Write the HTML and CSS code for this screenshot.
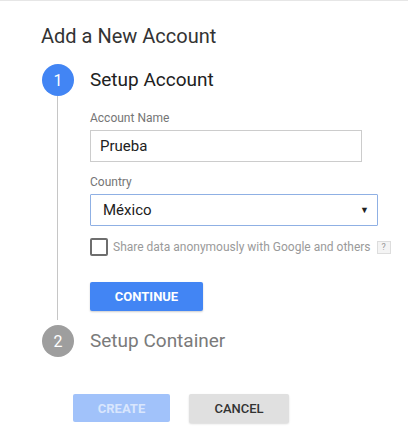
FILE: index.html
```html
<!DOCTYPE html>
<html lang="en">
<head>
<meta charset="utf-8">
<title>Add a New Account</title>
<link rel="stylesheet" href="styles.css">
</head>
<body>
<div class="page">
  <h1 class="title">Add a New Account</h1>

  <div class="stepper">
    <div class="step-head">
      <div class="num num-active">1</div>
      <div class="step-title">Setup Account</div>
    </div>
    <div class="step-body">
      <div class="rail-col"><div class="rail"></div></div>
      <div class="content">
        <label class="label">Account Name</label>
        <div class="input">Prueba</div>
        <label class="label label-country">Country</label>
        <div class="select">
          <span>México</span>
          <span class="caret">&#9660;</span>
        </div>
        <div class="check-row">
          <span class="checkbox"></span>
          <span class="check-text">Share data anonymously with Google and others</span>
          <span class="help">?</span>
        </div>
        <button class="btn btn-primary">CONTINUE</button>
      </div>
    </div>
    <div class="step-head step-2">
      <div class="num num-inactive">2</div>
      <div class="step-title step-title-inactive">Setup Container</div>
    </div>
  </div>

  <div class="actions">
    <button class="btn btn-disabled">CREATE</button>
    <button class="btn btn-secondary">CANCEL</button>
  </div>
</div>
</body>
</html>
```

FILE: styles.css
```css
html, body {
  margin: 0;
  padding: 0;
  background: #ffffff;
}
body {
  font-family: Roboto, "Liberation Sans", Arial, sans-serif;
  border-top: 1px solid #e6e6e6;
  height: 444px;
  overflow: hidden;
}
.page {
  padding-left: 41px;
}
.title {
  margin: 23px 0 0 0;
  font-size: 20px;
  line-height: 24px;
  font-weight: 400;
  color: #333333;
}
.stepper {
  margin-top: 16px;
  margin-left: 1px;
}
.step-head {
  display: flex;
  align-items: center;
  gap: 16px;
  height: 32px;
}
.num {
  width: 32px;
  height: 32px;
  border-radius: 50%;
  color: #ffffff;
  font-size: 16px;
  display: flex;
  align-items: center;
  justify-content: center;
  flex: none;
}
.num-active { background: #4285f4; }
.num-inactive { background: #9e9e9e; }
.step-title {
  font-size: 19px;
  color: #212121;
  line-height: 24px;
}
.step-title-inactive {
  color: #7a7a7a;
}
.step-body {
  display: flex;
  gap: 16px;
}
.rail-col {
  width: 32px;
  flex: none;
  display: flex;
  justify-content: center;
}
.rail {
  width: 0;
  border-left: 1px solid #c6c6c6;
  margin-right: 1px;
}
.content {
  padding-top: 14px;
  padding-bottom: 9px;
  display: flex;
  flex-direction: column;
  align-items: flex-start;
}
.label {
  font-size: 12px;
  line-height: 16px;
  color: #757575;
  margin-bottom: 4px;
}
.label-country {
  margin-top: 12px;
}
.input {
  box-sizing: border-box;
  width: 272px;
  height: 32px;
  border: 1px solid #cccccc;
  padding: 0 9px;
  font-size: 15px;
  line-height: 30px;
  color: #212121;
}
.select {
  box-sizing: border-box;
  width: 288px;
  height: 32px;
  border: 1px solid #8fb0e4;
  border-radius: 1px;
  padding: 0 8px 0 12px;
  font-size: 15px;
  line-height: 30px;
  color: #212121;
  display: flex;
  justify-content: space-between;
  align-items: center;
}
.caret {
  font-size: 9px;
  color: #222222;
}
.check-row {
  margin-top: 12px;
  display: flex;
  align-items: center;
  height: 18px;
}
.checkbox {
  box-sizing: border-box;
  width: 18px;
  height: 18px;
  border: 2px solid #6e6e6e;
  border-radius: 2px;
  flex: none;
}
.check-text {
  margin-left: 5px;
  font-size: 12px;
  color: #9a9a9a;
  white-space: nowrap;
}
.help {
  box-sizing: border-box;
  margin-left: 6px;
  width: 14px;
  height: 13px;
  border: 1px solid #dddddd;
  background: #f4f4f4;
  color: #999999;
  font-size: 9px;
  line-height: 11px;
  text-align: center;
}
.btn {
  font-family: Roboto, "Liberation Sans", Arial, sans-serif;
  border: none;
  border-radius: 2px;
  font-size: 13px;
  padding: 0;
  height: 29px;
  cursor: pointer;
}
.btn-primary {
  margin-top: 26px;
  width: 113px;
  background: #4285f4;
  color: #ffffff;
  font-weight: 700;
  box-shadow: 0 1px 2px rgba(0,0,0,0.2);
}
.step-2 {
  margin-top: 5px;
}
.actions {
  margin-top: 37px;
  margin-left: 32px;
  display: flex;
  gap: 19px;
}
.btn-disabled {
  width: 97px;
  height: 28px;
  background: #a1c2fa;
  color: #d9e6fd;
  font-weight: 700;
}
.btn-secondary {
  width: 100px;
  height: 29px;
  background: #e0e0e0;
  color: #333333;
  font-weight: 500;
  box-shadow: 0 1px 2px rgba(0,0,0,0.15);
}
```
